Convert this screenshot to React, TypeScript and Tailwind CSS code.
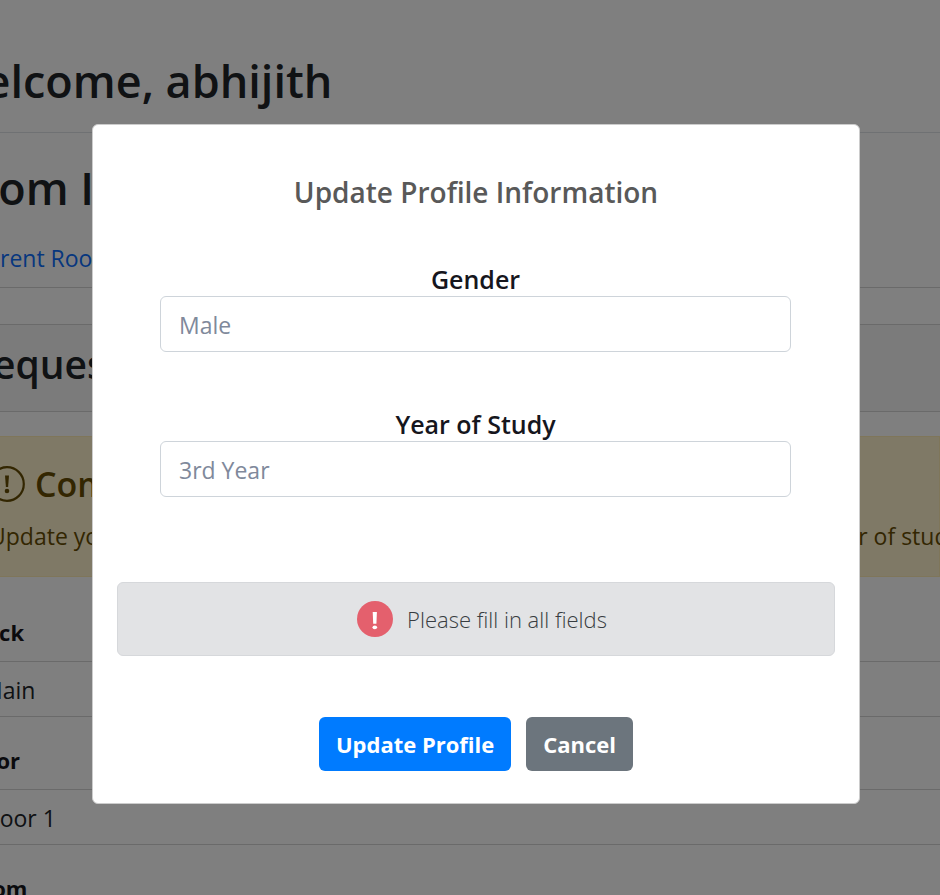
import React from "react";

function Field({ id, label, placeholder }: { id: string; label: string; placeholder: string }) {
  return (
    <div className="flex flex-col">
      <label htmlFor={id} className="pb-0.5 text-center text-[25px] leading-[30px] font-semibold text-[#16161d]">
        {label}
      </label>
      <input
        id={id}
        type="text"
        placeholder={placeholder}
        className="h-14 w-full rounded-md border border-[#ced4da] bg-white px-[18px] pt-0.5 text-[23px] text-[#495057] placeholder:text-[#80899b]"
      />
    </div>
  );
}

function Entry({ title, value }: { title: string; value: string }) {
  return (
    <div className="leading-8">
      <dt className="-ml-[18px] flex h-[73px] items-end border-b border-[#d5d5d5] pb-[13px] text-[22px] font-bold text-[#16161d]">
        {title}
      </dt>
      <dd className="flex h-[55px] items-center border-b border-[#d5d5d5] pt-0.5 text-[23px] text-[#212529]">{value}</dd>
    </div>
  );
}

function AlertIcon() {
  return (
    <svg viewBox="0 0 36 36" className="size-9 shrink-0" fill="none" aria-hidden="true">
      <circle cx="18" cy="18" r="16.8" stroke="currentColor" strokeWidth="2.2" />
      <path d="M16 9.500h4l-.9 11.500h-2.200z" fill="currentColor" />
      <circle cx="18" cy="25" r="2.300" fill="currentColor" />
    </svg>
  );
}

function ErrorIcon() {
  return (
    <svg viewBox="0 0 36 36" className="size-9 shrink-0" aria-hidden="true">
      <circle cx="18" cy="18" r="18" fill="#e4606d" />
      <path d="M15.700 11h4.200l-.5 11.800h-3.200z" fill="#fff" />
      <ellipse cx="17.800" cy="26.300" rx="2.300" ry="1.900" fill="#fff" />
    </svg>
  );
}

export default function App() {
  return (
    <div className="relative h-screen overflow-hidden bg-white font-['Open_Sans','Noto_Sans',sans-serif] text-[#212529]">
      <main>
        <header className="border-b border-[#dee2e6] pt-[49px] pb-[19px]">
          <h1 className="-ml-[58px] text-[45px] leading-16 font-semibold">Welcome, abhijith</h1>
        </header>
        <section className="border-b border-[#d5d5d5] pt-[23px] pb-3">
          <h2 className="-ml-[58px] text-[45px] leading-16 font-semibold whitespace-nowrap">Room Info</h2>
          <a href="#rooms" className="mt-[21px] -ml-[38px] block text-[23px] leading-[34px] text-[#0d6efd]">
            Current Room
          </a>
        </section>
        <section className="mt-9">
          <h2 className="h-22 border-y border-[#d5d5d5] bg-[#f7f7f7] pt-[7px] text-[39px] leading-16 font-semibold">
            <span className="-ml-[32px]">Requests</span>
          </h2>
          <div role="status" className="mt-6 -ml-[12px] h-[141px] border border-[#ffecb5] bg-[#fff3cd] pt-[23px] text-[#664d03]">
            <h3 className="flex items-center gap-2.5 text-[34px] leading-12 font-semibold">
              <AlertIcon />
              Complete your profile
            </h3>
            <p className="flex w-[971px] justify-between pt-1 text-[23px] leading-12 whitespace-nowrap">
              <span>Update your profile with your gender</span>
              <span>and year of study</span>
            </p>
          </div>
          <dl className="mt-3 -ml-[18px]">
            <Entry title="Block" value="Main" />
            <Entry title="Floor" value="Floor 1" />
            <Entry title="Room" value="101" />
          </dl>
        </section>
      </main>

      <div className="absolute inset-0 bg-black/50 pt-31 pl-3">
        <form
          role="dialog"
          aria-labelledby="profile-title"
          onSubmit={(e) => e.preventDefault()}
          className="mx-auto max-w-3xl rounded-md border border-[#cccccc] bg-white px-6 pt-[47px] pb-8"
        >
          <h2 id="profile-title" className="text-center text-[28px] leading-10 font-semibold text-[#595959]">
            Update Profile Information
          </h2>
          <div className="mt-[52px] flex flex-col gap-[57px] pr-11 pl-[43px]">
            <Field id="gender" label="Gender" placeholder="Male" />
            <Field id="year" label="Year of Study" placeholder="3rd Year" />
          </div>
          <div
            role="alert"
            className="mt-[85px] flex h-[74px] items-center justify-center gap-3.5 rounded-md border border-[#d6d8db] bg-[#e2e3e5] pl-3 text-[22px] font-light text-[#383d41]"
          >
            <ErrorIcon />
            <span>Please fill in all fields</span>
          </div>
          <div className="mt-[61px] flex justify-center gap-[15px] text-[22px] font-bold text-white">
            <button type="submit" className="h-[54px] rounded-md bg-[#007bff] px-[17px]">
              Update Profile
            </button>
            <button type="button" className="h-[54px] rounded-md bg-[#6c757d] px-[17px]">
              Cancel
            </button>
          </div>
        </form>
      </div>
    </div>
  );
}
